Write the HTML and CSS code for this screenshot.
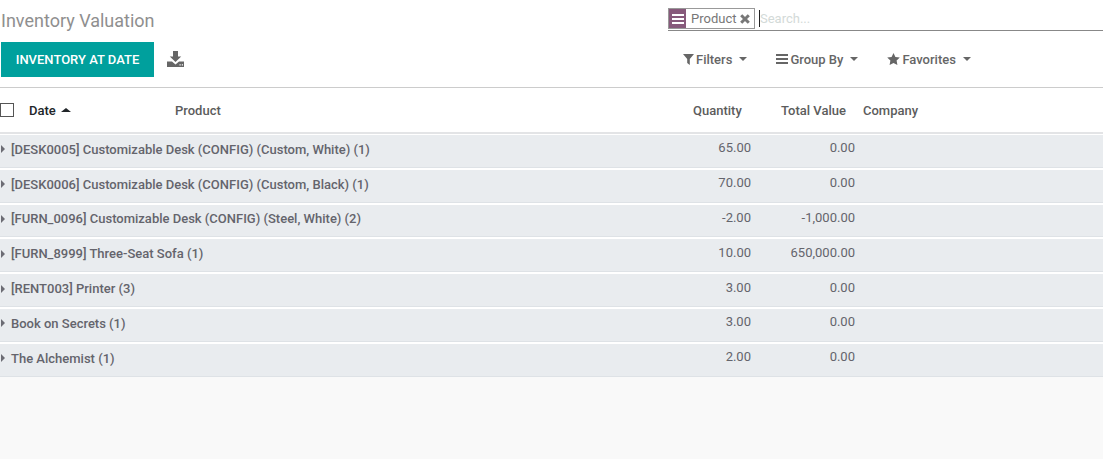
FILE: index.html
```html
<!DOCTYPE html>
<html lang="en">
<head>
<meta charset="utf-8">
<title>Inventory Valuation</title>
<link rel="stylesheet" href="styles.css">
</head>
<body>
<header class="panel">
  <div class="panel-left">
    <h1 class="title">Inventory Valuation</h1>
    <div class="actions">
      <button class="btn-primary">INVENTORY AT DATE</button>
      <svg class="download" width="17" height="16" viewBox="0 0 17 16"><path fill="#666" d="M6 0h5v5.500h3.200L8.500 11 2.800 5.500H6zM0 10.500h5l3.500 3 3.500-3h5V16H0z"/><path fill="#fff" d="M12.500 13.300h1.200v1.200h-1.200zM14.800 13.300H16v1.200h-1.200z"/></svg>
    </div>
  </div>
  <div class="panel-right">
    <div class="search">
      <div class="facet">
        <span class="facet-icon"><svg width="12" height="10" viewBox="0 0 12 10"><path fill="#fff" d="M0 0h12v2H0zM0 4h12v2H0zM0 8h12v2H0z"/></svg></span>
        <span class="facet-label">Product</span>
        <svg class="facet-x" width="10" height="10" viewBox="0 0 10 10"><path stroke="#777" stroke-width="3" d="M1.200 1.200l7.600 7.600M8.800 1.200L1.200 8.800"/></svg>
      </div>
      <span class="caret"></span>
      <span class="placeholder">Search...</span>
    </div>
    <div class="options">
      <span class="opt opt-filters"><svg width="11" height="11" viewBox="0 0 11 11"><path fill="#666" d="M0 0h11L6.800 5v6L4.200 9V5z"/></svg>Filters<i class="tri"></i></span>
      <span class="opt opt-group"><svg width="12" height="10" viewBox="0 0 12 10"><path fill="#666" d="M0 0h12v2H0zM0 4h12v2H0zM0 8h12v2H0z"/></svg>Group By<i class="tri"></i></span>
      <span class="opt opt-fav"><svg width="13" height="12" viewBox="0 0 13 12"><path fill="#666" d="M6.500 0l1.900 4 4.400.6-3.200 3 .8 4.400-3.900-2.100L2.600 12l.8-4.400-3.200-3L4.600 4z"/></svg>Favorites<i class="tri"></i></span>
    </div>
  </div>
</header>
<main class="list">
  <div class="list-head">
    <span class="check"></span>
    <span class="h-date">Date<i class="tri-up"></i></span>
    <span class="h-product">Product</span>
    <span class="h-qty">Quantity</span>
    <span class="h-val">Total Value</span>
    <span class="h-comp">Company</span>
  </div>
  <div class="row"><span class="name"><i class="tri-right"></i>[DESK0005] Customizable Desk (CONFIG) (Custom, White) (1)</span><span class="qty">65.00</span><span class="val">0.00</span></div>
  <div class="row"><span class="name"><i class="tri-right"></i>[DESK0006] Customizable Desk (CONFIG) (Custom, Black) (1)</span><span class="qty">70.00</span><span class="val">0.00</span></div>
  <div class="row"><span class="name"><i class="tri-right"></i>[FURN_0096] Customizable Desk (CONFIG) (Steel, White) (2)</span><span class="qty">-2.00</span><span class="val">-1,000.00</span></div>
  <div class="row"><span class="name"><i class="tri-right"></i>[FURN_8999] Three-Seat Sofa (1)</span><span class="qty">10.00</span><span class="val">650,000.00</span></div>
  <div class="row"><span class="name"><i class="tri-right"></i>[RENT003] Printer (3)</span><span class="qty">3.00</span><span class="val">0.00</span></div>
  <div class="row"><span class="name"><i class="tri-right"></i>Book on Secrets (1)</span><span class="qty">3.00</span><span class="val">0.00</span></div>
  <div class="row"><span class="name"><i class="tri-right"></i>The Alchemist (1)</span><span class="qty">2.00</span><span class="val">0.00</span></div>
</main>
</body>
</html>
```
FILE: styles.css
```css
* { box-sizing: border-box; }
html, body { margin: 0; height: 100%; }
body {
  background: #f9f9f9;
  font-family: Roboto, "Noto Sans", sans-serif;
  font-size: 13px;
  color: #4c4c4c;
  overflow: hidden;
}
.panel {
  height: 88px;
  background: #fff;
  border-bottom: 1px solid #ccc;
  display: flex;
  justify-content: space-between;
  padding-left: 1px;
}
.title {
  margin: 0;
  height: 42px;
  padding-top: 10px;
  font-size: 18px;
  line-height: 22px;
  font-weight: 400;
  color: #8f8f8f;
}
.actions { display: flex; align-items: center; gap: 13px; }
.btn-primary {
  width: 153px;
  height: 35px;
  padding: 0;
  border: 0;
  background: #00a09d;
  color: #fff;
  font: 500 13px Roboto, sans-serif;
}
.download { margin-top: -2px; }
.panel-right { width: 435px; }
.search {
  height: 31px;
  padding-top: 8px;
  border-bottom: 1px solid #888;
  display: flex;
  align-items: flex-start;
}
.facet {
  width: 87px;
  height: 21px;
  border: 1px solid #999;
  display: flex;
  align-items: center;
  font-size: 13px;
  color: #777;
  background: #fff;
}
.facet-icon {
  width: 17px;
  height: 19px;
  background: #875a7b;
  display: flex;
  align-items: center;
  justify-content: center;
}
.facet-label { margin-left: 5px; }
.facet-x { margin-left: 4px; }
.caret { width: 1px; height: 17px; background: #222; margin: 2px 0 0 4px; }
.placeholder { color: #d3dad8; font-size: 13px; line-height: 21px; }
.options { display: flex; height: 56px; align-items: center; padding: 0 0 0 15px; font-size: 13px; font-weight: 500; color: #666; }
.opt { display: inline-flex; align-items: center; gap: 2px; }
.opt-group { margin-left: 29px; }
.opt-fav { margin-left: 29px; }
.tri {
  margin-left: 5px;
  width: 0; height: 0;
  border-left: 4px solid transparent;
  border-right: 4px solid transparent;
  border-top: 4px solid #666;
}
.list { background: #fff; }
.list-head {
  height: 46px;
  border-bottom: 2px solid #e3e4e6;
  display: flex;
  align-items: center;
  font-weight: 500;
  color: #4c4c4c;
}
.check {
  width: 14px; height: 14px;
  border: 1px solid #555;
  flex: none;
}
.h-date { margin-left: 15px; width: 146px; color: #212529; display: flex; align-items: center; }
.tri-up {
  margin-left: 5px;
  width: 0; height: 0;
  border-left: 5px solid transparent;
  border-right: 5px solid transparent;
  border-bottom: 4px solid #212529;
}
.h-product { width: 518px; color: #5c5c5c; }
.h-qty { width: 49px; color: #5c5c5c; }
.h-val { margin-left: 39px; width: 65px; white-space: nowrap; color: #5c5c5c; }
.h-comp { margin-left: 17px; color: #5c5c5c; }
.row {
  height: 32.8px;
  margin-top: 2px;
  padding-bottom: 3px;
  background: #e9ecef;
  border-bottom: 1px solid #dee2e6;
  display: flex;
  align-items: center;
  color: #64646c;
}
.list-head + .row { margin-top: 1px; }
.name { font-weight: 500; width: 700px; display: flex; align-items: center; white-space: nowrap; }
.tri-right {
  margin: 0 6px 0 1px;
  width: 0; height: 0;
  border-top: 4px solid transparent;
  border-bottom: 4px solid transparent;
  border-left: 4px solid #6c6c74;
}
.qty { width: 51px; text-align: right; margin-top: -3px; }
.val { width: 104px; text-align: right; margin-top: -3px; }
```
